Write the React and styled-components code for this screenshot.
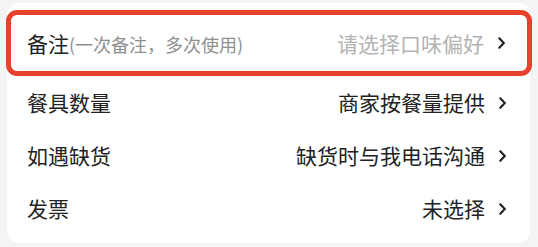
import React from "react";
import styled, { createGlobalStyle } from "styled-components";

const Global = createGlobalStyle`
  html, body { margin: 0; padding: 0; background: #f4f4f4; }
  body { font-family: "Noto Sans CJK SC", "Noto Sans", sans-serif; }
`;

const Card = styled.div`
  margin: 3px 0 4px 7px;
  width: 523px;
  background: #ffffff;
  border-radius: 12px;
  padding: 7px 0 8px;
  box-sizing: border-box;
`;

const Row = styled.div`
  display: flex;
  align-items: center;
  box-sizing: border-box;
  height: ${(p) => (p.$highlighted ? 66 : 53)}px;
  padding: ${(p) => (p.$highlighted ? "0 22px 0 16px" : "0 24px 0 20px")};
  margin: ${(p) => (p.$highlighted ? "0 -2px 0 -1px" : "0")};
  border: ${(p) => (p.$highlighted ? "5px solid #e5412b" : "none")};
  border-radius: ${(p) => (p.$highlighted ? "11px" : "0")};
`;

const Label = styled.span`
  font-size: 21px;
  color: #222222;
  line-height: 1;
  white-space: nowrap;
`;

const Hint = styled.span`
  font-size: 18px;
  color: #8f8f8f;
  line-height: 1;
`;

const Value = styled.span`
  margin-left: auto;
  font-size: 21px;
  line-height: 1;
  color: ${(p) => (p.$placeholder ? "#b3b3b3" : "#222222")};
  white-space: nowrap;
`;

const ChevronBox = styled.svg`
  width: 7px;
  height: 12px;
  margin-left: 14px;
  flex: none;
`;

const Chevron = () => (
  <ChevronBox viewBox="0 0 7 12">
    <polyline
      points="1.3,1.3 5.8,6 1.3,10.7"
      fill="none"
      stroke="#222"
      strokeWidth="2.2"
      strokeLinecap="round"
      strokeLinejoin="miter"
    />
  </ChevronBox>
);

const rows = [
  { label: "餐具数量", value: "商家按餐量提供" },
  { label: "如遇缺货", value: "缺货时与我电话沟通" },
  { label: "发票", value: "未选择" },
];

export default function App() {
  return (
    <>
      <Global />
      <Card>
        <Row $highlighted>
          <Label>
            备注<Hint>(一次备注，多次使用)</Hint>
          </Label>
          <Value $placeholder>请选择口味偏好</Value>
          <Chevron />
        </Row>
        {rows.map((r) => (
          <Row key={r.label}>
            <Label>{r.label}</Label>
            <Value>{r.value}</Value>
            <Chevron />
          </Row>
        ))}
      </Card>
    </>
  );
}
